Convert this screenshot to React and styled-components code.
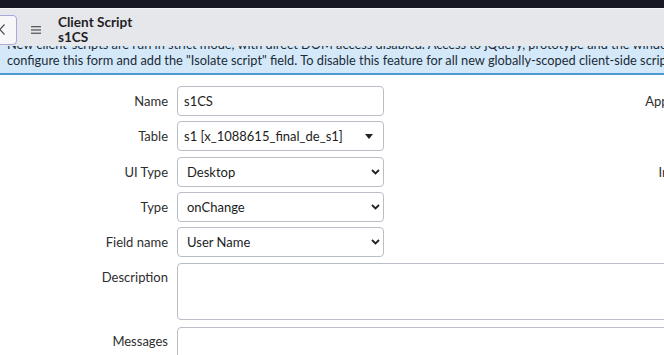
import React from 'react'
import styled, { createGlobalStyle } from 'styled-components'

const GlobalStyle = createGlobalStyle`
  html, body {
    margin: 0;
    padding: 0;
    overflow: hidden;
    background: #ffffff;
  }
  body {
    font-family: Lato, "Noto Sans", sans-serif;
    color: #2e2e2e;
  }
  *, *::before, *::after {
    box-sizing: border-box;
  }
`

const Page = styled.div`
  width: 1100px;
`

const TopBar = styled.div`
  height: 8px;
  background: #181824;
`

const Header = styled.header`
  display: flex;
  align-items: center;
  height: 38px;
  padding: 4px 0 0;
  background: #e6e7eb;
  border-top: 1px solid #f4f4f7;
`

const BackButton = styled.button`
  width: 31px;
  height: 30px;
  margin-left: -14px;
  display: flex;
  align-items: center;
  justify-content: flex-end;
  padding: 0 11px 0 0;
  background: #f7f7fa;
  border: 1px solid #a6a9dd;
  border-radius: 4px;
  color: #4a4a55;
`

const MenuIcon = styled.svg`
  margin-left: 14px;
  width: 10px;
  height: 8px;
  color: #5a5a63;
`

const Title = styled.div`
  margin-left: 17px;
  display: flex;
  flex-direction: column;
  font-size: 13.6px;
  font-weight: 700;
  line-height: 14.5px;
  color: #1f1f26;
`

const Banner = styled.div`
  height: 29px;
  overflow: hidden;
  display: flex;
  align-items: flex-end;
  padding: 0 7px 5px;
  background: #d3e9f9;
  border-bottom: 2px solid #4d9bd6;
  font-size: 12.8px;
  line-height: 15.5px;
  white-space: nowrap;
  color: #1e2a36;
`

const Form = styled.form`
  padding-top: 11px;
  display: flex;
  flex-direction: column;
`

const Columns = styled.div`
  display: grid;
  grid-template-columns: 542px 542px;
`

const Column = styled.div`
  display: flex;
  flex-direction: column;
  gap: 5.3px;
`

const Row = styled.div`
  display: grid;
  grid-template-columns: 168px ${p => p.$wide ? '900px' : '207px'};
  column-gap: 9px;
  align-items: ${p => p.$top ? 'start' : 'center'};
  margin-top: ${p => p.$space || 0}px;
`

const Label = styled.label`
  text-align: right;
  font-size: 13px;
  color: #2e2e2e;
  padding-top: ${p => p.$top ? '6px' : '0'};
`

const TextInput = styled.div`
  height: 30px;
  display: flex;
  align-items: center;
  padding: 0 6px;
  border: 1px solid #b9bdc5;
  border-radius: 4px;
  background: #fff;
  font-size: 13px;
  color: #1c1c1c;
`

const SelectBox = styled(TextInput)`
  justify-content: space-between;
  padding: ${p => p.$reference ? '0 10px 0 6px' : '0 3px 0 9px'};
`

const Arrow = styled.svg`
  width: ${p => p.$w}px;
  height: ${p => p.$h}px;
  color: #222;
`

const TextArea = styled.div`
  height: ${p => p.$h}px;
  border: 1px solid #b9bdc5;
  border-radius: 4px;
  background: #fff;
`

const Chevron = () => (
  <Arrow $w={9} $h={6} viewBox="0 0 9 6">
    <polyline points="1,1 4.5,4.5 8,1" fill="none" stroke="currentColor" strokeWidth="1.8" />
  </Arrow>
)

const Triangle = () => (
  <Arrow $w={8} $h={5} viewBox="0 0 8 5">
    <polygon points="0,0 8,0 4,5" fill="currentColor" />
  </Arrow>
)

function Select({ value }) {
  return (
    <SelectBox>
      <span>{value}</span>
      <Chevron />
    </SelectBox>
  )
}

export default function App() {
  return (
    <Page>
      <GlobalStyle />
      <TopBar />
      <Header>
        <BackButton aria-label="Back">
          <svg width="6" height="11" viewBox="0 0 6 11">
            <polyline points="5.5,0.5 0.8,5.5 5.5,10.5" fill="none" stroke="currentColor" strokeWidth="1.2" />
          </svg>
        </BackButton>
        <MenuIcon viewBox="0 0 10 8">
          <rect x="0" y="0" width="10" height="1.3" fill="currentColor" />
          <rect x="0" y="3.3" width="10" height="1.3" fill="currentColor" />
          <rect x="0" y="6.6" width="10" height="1.3" fill="currentColor" />
        </MenuIcon>
        <Title>
          <span>Client Script</span>
          <span>s1CS</span>
        </Title>
      </Header>
      <Banner>
        <div>
          New client-scripts are run in strict mode, with direct DOM access disabled. Access to jQuery, prototype and the window object are likewise disabled. To disable this on a per-script basis,
          <br />
          configure this form and add the "Isolate script" field. To disable this feature for all new globally-scoped client-side scripts set the system property "glide.script.block.client.globals" to false.
        </div>
      </Banner>
      <Form>
        <Columns>
          <Column>
            <Row>
              <Label>Name</Label>
              <TextInput>s1CS</TextInput>
            </Row>
            <Row>
              <Label>Table</Label>
              <SelectBox $reference>
                <span>s1 [x_1088615_final_de_s1]</span>
                <Triangle />
              </SelectBox>
            </Row>
            <Row>
              <Label>UI Type</Label>
              <Select value="Desktop" />
            </Row>
            <Row>
              <Label>Type</Label>
              <Select value="onChange" />
            </Row>
            <Row>
              <Label>Field name</Label>
              <Select value="User Name" />
            </Row>
          </Column>
          <Column>
            <Row>
              <Label>Application</Label>
              <TextInput>Final de s1</TextInput>
            </Row>
            <Row>
              <Label>Active</Label>
              <TextInput />
            </Row>
            <Row>
              <Label>Inherited</Label>
              <TextInput />
            </Row>
            <Row>
              <Label>Global</Label>
              <TextInput />
            </Row>
          </Column>
        </Columns>
        <Row $wide $top $space={6}>
          <Label $top>Description</Label>
          <TextArea $h={57} />
        </Row>
        <Row $wide $top $space={7}>
          <Label $top>Messages</Label>
          <TextArea $h={57} />
        </Row>
      </Form>
    </Page>
  )
}
